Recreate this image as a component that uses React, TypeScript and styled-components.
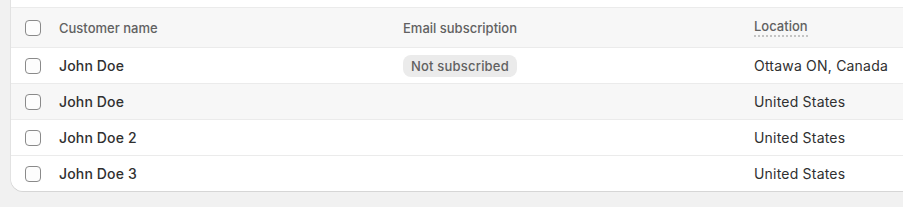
import React from 'react';
import styled, { createGlobalStyle } from 'styled-components';

const GlobalStyle = createGlobalStyle`
  html, body {
    margin: 0;
    padding: 0;
    background: #f1f1f1;
    overflow: hidden;
  }
  body {
    font-family: Inter, "Noto Sans", sans-serif;
    font-size: 13px;
    color: #303030;
    -webkit-font-smoothing: antialiased;
  }
`;

const Page = styled.div`
  padding: 0 0 0 11px;
  height: 207px;
  box-sizing: border-box;
`;

const Card = styled.div`
  margin-right: -24px;
  background: #ffffff;
  border-radius: 0 0 12px 12px;
  overflow: hidden;
  box-shadow: 0 1px 0 0 rgba(26, 26, 26, 0.12), -1px 0 0 0 rgba(26, 26, 26, 0.07),
    inset 0 -1px 0 0 rgba(0, 0, 0, 0.08);
`;

const Toolbar = styled.div`
  height: 7px;
  border-bottom: 1px solid #ebebeb;
`;

const Row = styled.div<{ $header?: boolean; $hover?: boolean }>`
  display: grid;
  grid-template-columns: 48px 344px 351px 1fr;
  align-items: center;
  height: ${({ $header }) => ($header ? '39px' : '35px')};
  background: ${({ $header, $hover }) => ($header || $hover ? '#f7f7f7' : '#ffffff')};
  border-bottom: 1px solid #ebebeb;

  &:last-child {
    border-bottom: none;
  }
`;

const CheckCell = styled.div`
  display: flex;
  align-items: center;
  padding-left: 14px;
`;

const Checkbox = styled.span`
  display: block;
  width: 16px;
  height: 16px;
  box-sizing: border-box;
  border: 1px solid #8a8a8a;
  border-radius: 4px;
  background: #fdfdfd;
`;

const HeadText = styled.span<{ $dotted?: boolean }>`
  color: #616161;
  font-weight: 500;
  font-size: 13px;
  justify-self: start;
  padding-bottom: ${({ $dotted }) => ($dotted ? '1px' : '0')};
  border-bottom: ${({ $dotted }) => ($dotted ? '2px dotted #c4c4c4' : 'none')};
  line-height: 16px;
`;

const Name = styled.span`
  font-size: 14px;
  font-weight: 550;
  letter-spacing: 0.15px;
  color: #303030;
`;

const Cell = styled.span`
  font-size: 14px;
  letter-spacing: 0.2px;
  color: #303030;
`;

const Badge = styled.span`
  justify-self: start;
  display: inline-flex;
  align-items: center;
  height: 22px;
  padding: 0 8px;
  border-radius: 8px;
  background: #ebebeb;
  color: #616161;
  font-weight: 500;
  font-size: 13px;
  letter-spacing: 0.2px;
`;

interface ICustomer {
  name: string;
  subscribed: boolean;
  location: string;
  hover?: boolean;
}

const customers: ICustomer[] = [
  { name: 'John Doe', subscribed: false, location: 'Ottawa ON, Canada' },
  { name: 'John Doe', subscribed: true, location: 'United States', hover: true },
  { name: 'John Doe 2', subscribed: true, location: 'United States' },
  { name: 'John Doe 3', subscribed: true, location: 'United States' },
];

export default function App() {
  return (
    <Page>
      <GlobalStyle />
      <Card>
        <Toolbar />
        <Row $header>
          <CheckCell>
            <Checkbox />
          </CheckCell>
          <HeadText>Customer name</HeadText>
          <HeadText>Email subscription</HeadText>
          <HeadText $dotted>Location</HeadText>
        </Row>
        {customers.map((c, i) => (
          <Row key={i} $hover={c.hover}>
            <CheckCell>
              <Checkbox />
            </CheckCell>
            <Name>{c.name}</Name>
            {c.subscribed ? <span /> : <Badge>Not subscribed</Badge>}
            <Cell>{c.location}</Cell>
          </Row>
        ))}
      </Card>
    </Page>
  );
}
